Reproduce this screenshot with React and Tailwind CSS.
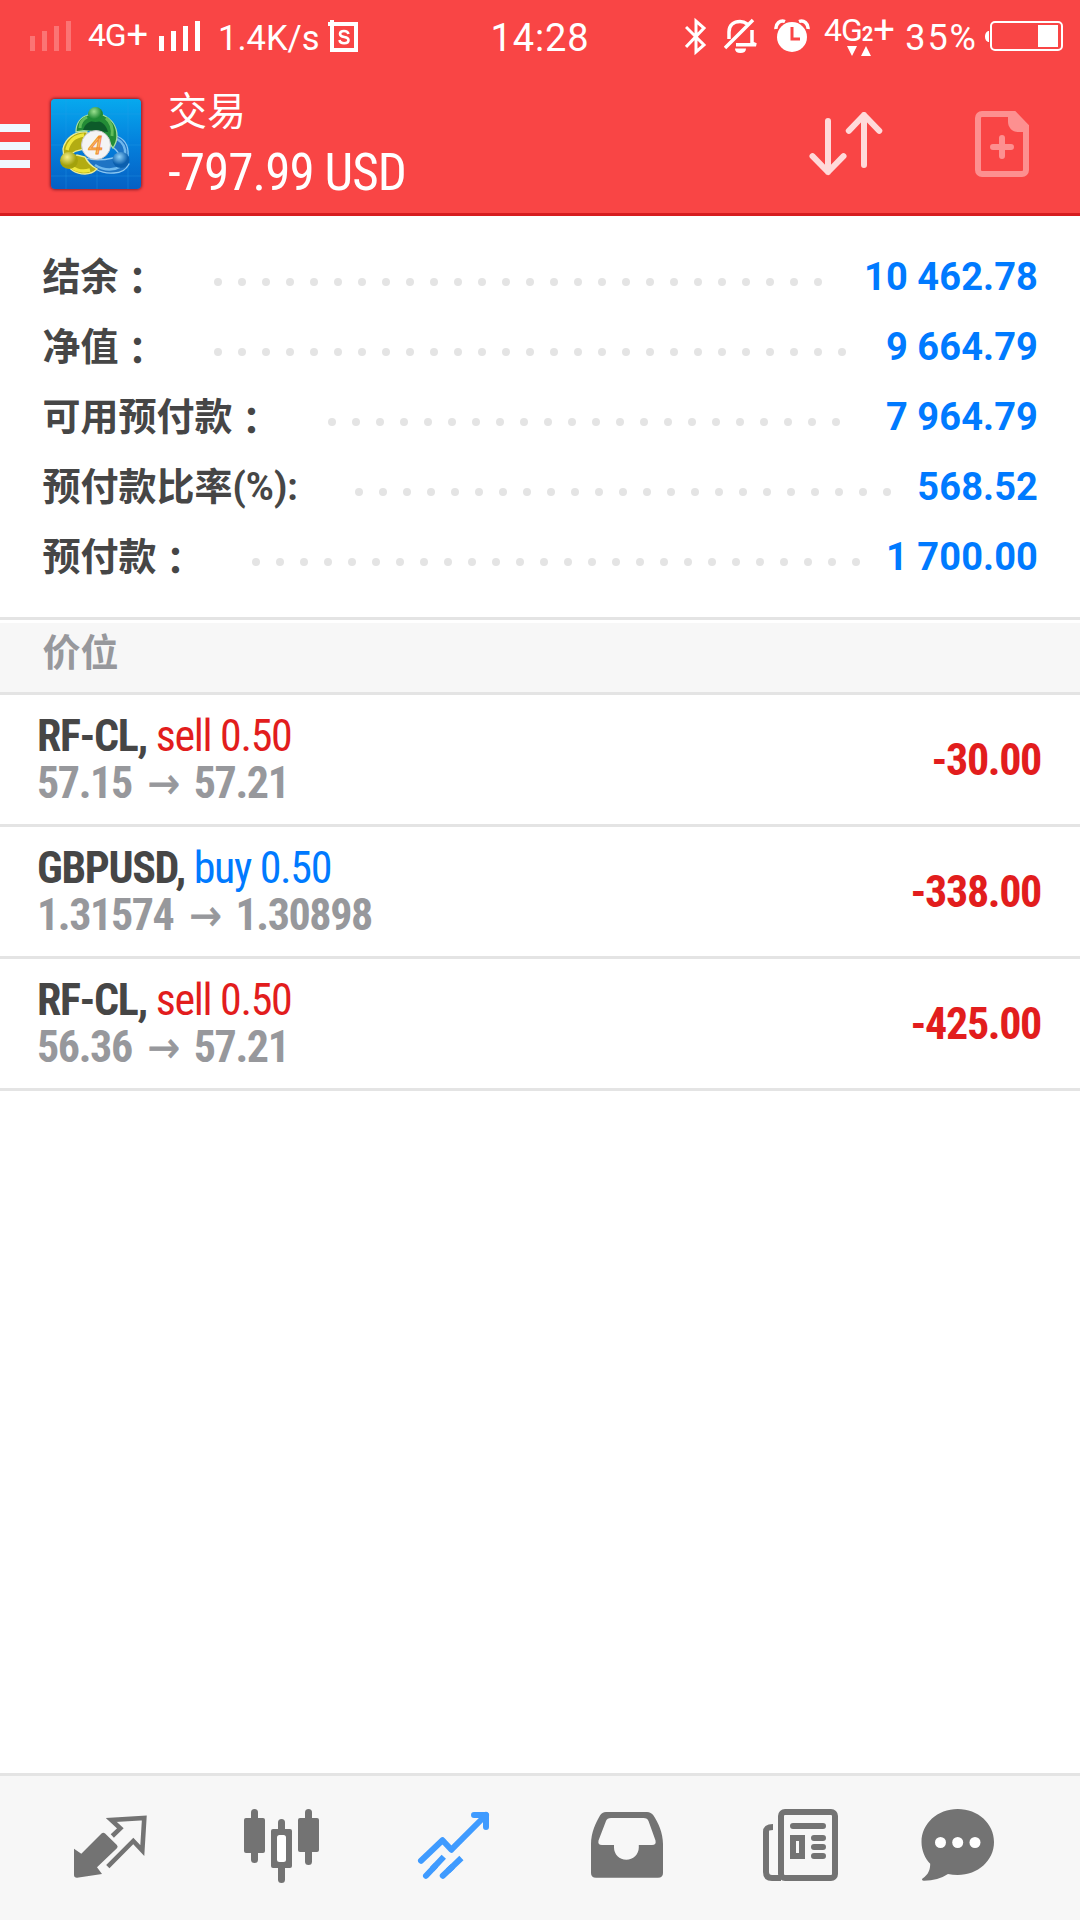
const summary = [
  { label: '结余', colon: true, value: '10 462.78', dots: 26 },
  { label: '净值', colon: true, value: '9 664.79', dots: 27 },
  { label: '可用预付款', colon: true, value: '7 964.79', dots: 22 },
  { label: '预付款比率(%):', value: '568.52', dots: 23 },
  { label: '预付款', colon: true, value: '1 700.00', dots: 26 },
];

const positions = [
  { id: 1, symbol: 'RF-CL', side: 'sell', volume: '0.50', open: '57.15', current: '57.21', profit: '-30.00' },
  { id: 2, symbol: 'GBPUSD', side: 'buy', volume: '0.50', open: '1.31574', current: '1.30898', profit: '-338.00' },
  { id: 3, symbol: 'RF-CL', side: 'sell', volume: '0.50', open: '56.36', current: '57.21', profit: '-425.00' },
];

function Signal({ className }) {
  return (
    <svg className={className} width="41" height="30" viewBox="0 0 41 30" fill="currentColor">
      <rect x="0" y="15" width="5" height="15" />
      <rect x="12" y="10" width="5" height="20" />
      <rect x="24" y="5" width="5" height="25" />
      <rect x="36" y="0" width="5" height="30" />
    </svg>
  );
}

function StatusBar() {
  return (
    <div className="flex h-[72px] items-start justify-between font-[Roboto] text-white">
      <div className="flex items-start pl-[30px]">
        <Signal className="mt-[21px] text-[#fb7474]" />
        <div className="mt-[17px] ml-[17px] flex w-[71px] leading-[36px]">
          <span className="text-[32px] tracking-[-1.2px]">4G</span>
          <span className="ml-px text-[38px]">+</span>
        </div>
        <Signal className="mt-[21px]" />
        <span className="mt-[18px] ml-[18px] w-[108px] text-[34.5px] leading-[40px] whitespace-nowrap">1.4K/s</span>
        <svg className="mt-[20px] ml-[2px]" width="30" height="32" viewBox="0 0 30 32" fill="none" stroke="#fff">
          <rect x="4" y="4" width="24" height="26" strokeWidth="4" />
          <path d="M0 4h4M4 0v4" strokeWidth="4" />
          <path d="M20.500 14c-.5-2-2-3-4.500-3-2.500 0-4 1-4 3 0 4.500 8.500 1.500 8.500 6 0 2-1.700 3.200-4.300 3.200-2.700 0-4.400-1.200-4.700-3.200" strokeWidth="2.600" />
        </svg>
      </div>
      <div className="flex items-start pr-[17px]">
        <svg className="mt-[17px]" width="22" height="39" viewBox="0 0 22 39" fill="none" stroke="#fff" strokeWidth="3">
          <path d="M1 10l18 18-8 7v-31l8 7L1 30" />
        </svg>
        <svg className="mt-[18px] ml-[17px]" width="34" height="38" viewBox="0 0 34 38" fill="none" stroke="#fff" strokeWidth="3.500">
          <path d="M5 21v-7C5 7 10 3.500 16 3.500c3 0 5 .7 7 2.300M28 12v13l4 1.800H12M1 30L29 2" />
          <path d="M11 30.500h11c0 3-2 4.500-5.500 4.500S11 33.500 11 30.500z" fill="#fff" stroke="none" />
        </svg>
        <svg className="mt-[18px] ml-[16px]" width="36" height="36" viewBox="0 0 36 36">
          <circle cx="18" cy="19" r="15" fill="#fff" />
          <path d="M2 11C1.500 6 6 1.500 11 3.500M34 11c.5-5-4-9.500-9-7.500" fill="none" stroke="#fff" strokeWidth="3.500" />
          <path d="M18 9v12h8" fill="none" stroke="#f94545" strokeWidth="3" />
        </svg>
        <div className="relative mt-[12px] ml-[14px] flex w-[70px] leading-[36px]">
          <span className="text-[32px] tracking-[-1px]">4G</span>
          <span className="mt-[4px] text-[20px] font-bold">2</span>
          <span className="text-[38px]">+</span>
          <svg className="absolute top-[34px] left-[23px]" width="24" height="10" fill="#fff">
            <path d="M0 0h10L5 10zM14 10h10L19 0z" />
          </svg>
        </div>
        <span className="mt-[18px] w-[84px] text-right text-[36px] leading-[40px] tracking-[2px]">35%</span>
        <svg className="mt-[21px] ml-[7px]" width="78" height="30" viewBox="0 0 78 30" fill="#fff">
          <path d="M4 10v11C1.500 21 0 18.500 0 15.500S1.500 10 4 10z" />
          <rect x="6" y="1" width="71" height="28" rx="4" fill="none" stroke="#fff" strokeWidth="2" />
          <rect x="53" y="4" width="20" height="22" />
        </svg>
      </div>
    </div>
  );
}

function AppLogo() {
  return (
    <svg className="rounded-[4px] shadow-[0_0_3px_1px_#8f1d2a]" width="90" height="90" viewBox="0 0 90 90">
      <defs>
        <linearGradient id="sky" x1="0" y1="0" x2="0" y2="1">
          <stop offset="0" stopColor="#07a9ee" />
          <stop offset="0.5" stopColor="#0480dc" />
          <stop offset="1" stopColor="#0560c4" />
        </linearGradient>
        <radialGradient id="green" cx="0.4" cy="0.3">
          <stop offset="0" stopColor="#9be08f" />
          <stop offset="1" stopColor="#1f8b35" />
        </radialGradient>
        <radialGradient id="yellow" cx="0.4" cy="0.3">
          <stop offset="0" stopColor="#f6f08a" />
          <stop offset="1" stopColor="#a3a10c" />
        </radialGradient>
        <radialGradient id="blue" cx="0.4" cy="0.3">
          <stop offset="0" stopColor="#8fd0f8" />
          <stop offset="1" stopColor="#0b5fae" />
        </radialGradient>
      </defs>
      <rect width="90" height="90" fill="url(#sky)" />
      <path d="M15 0v90M46 0v90M77 0v90M0 15h90M0 46h90M0 77h90" stroke="#2ba0ea" strokeOpacity="0.3" />
      <path d="M63 36c10 3 15 10 14 21l-4 4-8-10-10-9zM35 59c8 3 18 2 27 0l16 6c-3 6-9 9-15 9-12 1-22-4-28-15z" fill="#1f74c4" stroke="#8cc8f2" strokeWidth="1.300" />
      <path d="M66 40c7 4 9 9 8 16M44 66c8 5 18 6 27 1" fill="none" stroke="#6fb8ee" strokeWidth="2.500" />
      <path d="M36 33c-13-1-22 7-24 17l1 9 12-7 12-3zM14 62c4 9 11 13 20 13 5 0 9-2 12-5-6-3-10-7-12-12l-8-2z" fill="#b3ac12" stroke="#eeee94" strokeWidth="1.300" />
      <path d="M33 36c-9 1-15 6-17 15M21 68c5 4 11 5 18 3" fill="none" stroke="#efe63c" strokeWidth="3.500" />
      <path d="M25 33c0-9 5-15 12-17h15c9 4 14 12 14 21 0 5-2 9-4 12l-8-12-16-6z" fill="#238c36" stroke="#a9dfa0" strokeWidth="1.300" />
      <path d="M55 19c5 4 7 11 6 18M29 29c0-5 3-9 7-11" fill="none" stroke="#62bd5a" strokeWidth="3" />
      <path d="M32 31c2-6 6-9 12-9s11 3 13 11z" fill="#0d5b2a" />
      <circle cx="44.500" cy="15.500" r="7.500" fill="url(#green)" />
      <ellipse cx="18" cy="61.500" rx="9" ry="8.500" fill="url(#yellow)" />
      <ellipse cx="70" cy="61" rx="8.500" ry="8" fill="url(#blue)" />
      <circle cx="45" cy="46" r="14.500" fill="#f4f4f4" stroke="#c9c9c9" />
      <text x="44.500" y="55" textAnchor="middle" fontFamily="Roboto" fontSize="26" fontStyle="italic" fill="#ffc069" stroke="#ee8a2c" strokeWidth="0.900">4</text>
    </svg>
  );
}

function Header() {
  return (
    <header className="h-[216px] border-b-[3px] border-[#d61c1f] bg-[#f94545]">
      <div className="relative">
        <StatusBar />
        <div className="absolute inset-x-0 top-0 text-center font-[Roboto] text-[38px] leading-[76px] tracking-[0.9px] text-white">14:28</div>
      </div>
      <div className="flex items-start">
        <div className="mt-[52px] flex w-[50px] flex-col gap-[10px]">
          <i className="h-2 w-[30px] bg-[#f0f8ff]" />
          <i className="h-2 w-[30px] bg-[#f0f8ff]" />
          <i className="h-2 w-[30px] bg-[#f0f8ff]" />
        </div>
        <div className="mt-[27px] ml-px">
          <AppLogo />
        </div>
        <div className="mt-[11px] ml-[27px] flex-1 text-white">
          <div className="font-['Noto_Sans_CJK_SC',sans-serif] text-[39px] leading-[50px]">交易</div>
          <div className="mt-[10px] font-['Roboto_Condensed',Roboto,sans-serif] text-[51px] leading-[60px] tracking-[-0.9px] font-stretch-condensed whitespace-nowrap">-797.99 USD</div>
        </div>
        <svg className="mt-[40px] mr-[92px]" width="74" height="64" viewBox="0 0 74 64" fill="none" stroke="#ffdada" strokeWidth="6" strokeLinecap="round" strokeLinejoin="round">
          <path d="M19 9v51M3.500 44.200L19 60l15.500-15.800M55 53V3M39.800 18.800L55 3l15.300 15.800" />
        </svg>
        <svg className="mt-[39px] mr-[51px]" width="54" height="66" viewBox="0 0 54 66" fill="none" stroke="#fd9090" strokeWidth="6">
          <path d="M7 3h32l12 12.500V59a4 4 0 0 1-4 4H7a4 4 0 0 1-4-4V7a4 4 0 0 1 4-4z" />
          <path d="M33 4h7l11 11v6h-8c-6 0-10-5-10-10z" fill="#fd9090" stroke="none" />
          <path d="M18 36h18M27 27v18" strokeLinecap="round" />
        </svg>
      </div>
    </header>
  );
}

function SummaryRow({ row }) {
  return (
    <div className="flex h-[70px] items-center pr-[42px] pl-[42.5px] text-[38px] leading-[70px] font-bold">
      <span className="font-[Roboto,'Noto_Sans_CJK_SC',sans-serif] whitespace-nowrap text-[#464646]">{row.label}</span>
      {row.colon && <span className="mt-px font-['Noto_Sans_CJK_TC',sans-serif] text-[#464646]">：</span>}
      <span className="mt-[9px] ml-[57.5px] flex flex-1 gap-4">
        {Array.from({ length: row.dots }, (_, i) => (
          <i key={i} className="size-2 shrink-0 rounded-full bg-[#e4e4e4]" />
        ))}
      </span>
      <span className="font-[Roboto] tracking-[0.1px] whitespace-nowrap text-[#007aff]">{row.value}</span>
    </div>
  );
}

function PositionRow({ position }) {
  return (
    <li className="flex h-[132px] items-center justify-between border-b-[3px] border-[#e4e4e4] pt-px pr-[39px] pl-[37px] font-['Roboto_Condensed',Roboto,sans-serif] text-[44px] leading-[47px] tracking-[-1.35px] font-stretch-condensed">
      <div>
        <div className="whitespace-nowrap">
          <span className="font-bold text-[#464646]">{position.symbol}, </span>
          <span className={position.side === 'sell' ? 'text-[#e21d1d]' : 'text-[#007aff]'}>
            {position.side} {position.volume}
          </span>
        </div>
        <div className="flex font-bold tracking-[-1.4px] text-[#97989c]">
          <span>{position.open}</span>
          <span className="mr-[15px] ml-[16px] font-['DejaVu_Sans'] text-[43px] font-normal [-webkit-text-stroke:0.7px]">→</span>
          <span>{position.current}</span>
        </div>
      </div>
      <div className="pt-px font-bold text-[#e21d1d]">{position.profit}</div>
    </li>
  );
}

function QuotesIcon() {
  return (
    <svg width="172" height="144" viewBox="0 0 172 144" fill="#737373">
      <path d="M50 72.700l7.300 5L77.500 57.500q1.800-1.600 3.600 0l11.800 11.600q1.500 1.700 0 3.200L73 91.300l5 6.700-25 3.700q-3 0-3-2.700z" />
      <path d="M88.300 60l8-7.700-9-8.300 33-2-2 32.500-9-9.500-25.500 25.700" fill="none" stroke="#737373" strokeWidth="4.600" />
    </svg>
  );
}

function ChartIcon() {
  return (
    <svg width="172" height="144" viewBox="0 0 172 144" fill="#737373">
      <rect x="55" y="33" width="7" height="54" rx="3.500" />
      <rect x="48" y="42" width="21" height="35" rx="2" />
      <rect x="82" y="43" width="7" height="64" rx="3.500" />
      <rect x="75" y="53" width="21" height="39" rx="2" />
      <rect x="81" y="59" width="9" height="27" rx="2.500" fill="#fff" />
      <rect x="109" y="33" width="7" height="56" rx="3.500" />
      <rect x="102" y="42" width="21" height="34" rx="2" />
    </svg>
  );
}

function TradeIcon() {
  return (
    <svg width="172" height="144" viewBox="0 0 172 144" fill="none" stroke="#3f9bff" strokeWidth="6">
      <path d="M53 84.700l21.500-20.400 8.900 9.400L118 39" strokeLinejoin="round" strokeLinecap="round" />
      <path d="M106 39h12v12" strokeLinejoin="round" strokeLinecap="round" />
      <path d="M58 99.700l9-9.500M74.800 99.700l9-8.500" strokeLinecap="round" />
      <path d="M64 93.300l11.800-12.500M80 94.800l13.400-12.800" />
    </svg>
  );
}

function HistoryIcon() {
  return (
    <svg width="172" height="144" viewBox="0 0 172 144" fill="#737373">
      <path
        fillRule="evenodd"
        d="M51 68c0-11 5-22 9-28.500Q62 36 66 36h41q4 0 6.500 3.500C118 46 123 57 123 68v29q0 4.700-5 4.700H56q-5 0-5-4.700zM66 45l-7.500 19.500Q57.500 69 62 69h12v2.500c0 7 5.500 12.300 12.300 12.300S98.800 78.500 98.800 71.500V69H112q4.500 0 3.500-4.500L108.500 45q-1-3-5-3H71q-4 0-5 3z"
      />
    </svg>
  );
}

function NewsIcon() {
  return (
    <svg width="172" height="144" viewBox="0 0 172 144" fill="none" stroke="#737373" strokeWidth="6">
      <rect x="69" y="36" width="54" height="66" rx="4" />
      <path d="M61 51c-5 0-7 1-7 5v40c0 4 2 6 6 6h9" />
      <path d="M81 50h30M102 62h9M102 71h9M102 80h9" strokeLinecap="round" />
      <rect x="81" y="62" width="9" height="18" />
    </svg>
  );
}

function MessagesIcon() {
  return (
    <svg width="172" height="144" viewBox="0 0 172 144" fill="#737373">
      <path d="M73.700 33C94 33 110 47.500 110 66S94 99 73.700 99q-5 0-9.700-1-10 6.700-24 6.700c-2 0-2.500-1.200-1.500-2.200 6-4 7.700-9 7.700-14.800-5-5-8.700-13-8.700-21.700C37.500 47.500 53.500 33 73.700 33z" />
      <g fill="#fff">
        <circle cx="56.500" cy="66.500" r="5.500" />
        <circle cx="73.700" cy="66.500" r="5.500" />
        <circle cx="91" cy="66.500" r="5.500" />
      </g>
    </svg>
  );
}

export default function App() {
  return (
    <div className="flex h-[1920px] w-[1080px] flex-col overflow-hidden bg-white">
      <Header />
      <section className="h-[401px] pt-[26px]">
        {summary.map((row) => (
          <SummaryRow key={row.label} row={row} />
        ))}
      </section>
      <div className="border-y-[3px] border-[#e4e4e4] pt-[3px]">
        <h2 className="h-[69px] bg-[#f7f7f7] pl-[42.5px] font-['Noto_Sans_CJK_SC',sans-serif] text-[38px] leading-[54px] font-bold text-[#97989c]">价位</h2>
      </div>
      <ul className="flex-1">
        {positions.map((position) => (
          <PositionRow key={position.id} position={position} />
        ))}
      </ul>
      <nav className="flex h-[147px] border-t-[3px] border-[#e4e4e4] bg-[#f7f7f7] px-6">
        <QuotesIcon />
        <ChartIcon />
        <TradeIcon />
        <HistoryIcon />
        <NewsIcon />
        <MessagesIcon />
      </nav>
    </div>
  );
}
